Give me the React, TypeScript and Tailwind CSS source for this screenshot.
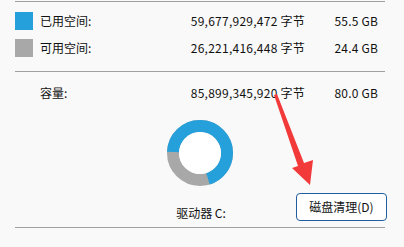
import React from "react";

const font = { fontFamily: '"Noto Sans CJK SC", "Noto Sans", sans-serif' };

function Row({ color, label, bytes, gb }: { color?: string; label: string; bytes: string; gb: string }) {
  return (
    <div className="flex items-center h-[18px]">
      <div className="w-[18px] h-[18px] shrink-0" style={color ? { backgroundColor: color } : undefined} />
      <div className="ml-[7px] w-[146px] text-[12px] leading-none text-[#111111]">{label}</div>
      <div className="w-[119px] text-right text-[12px] tracking-[0.25px] leading-none text-[#111111] whitespace-nowrap">{bytes}</div>
      <div className="w-[73px] text-right text-[12px] tracking-[0.2px] leading-none text-[#111111] whitespace-nowrap">{gb}</div>
    </div>
  );
}

export default function App() {
  const r = 27;
  const c = 2 * Math.PI * r;
  const used = 55.5 / 80;
  return (
    <div className="relative w-[404px] h-[247px] bg-[#f9f9f9] overflow-hidden" style={font}>
      <div className="ml-[15px] w-[370px] pt-[1px]">
        <div className="h-px bg-[#a0a0a0]" />
        <div className="pt-[10px] flex flex-col gap-[9px]">
          <Row color="#26a0da" label="已用空间:" bytes="59,677,929,472 字节" gb="55.5 GB" />
          <Row color="#a8a8a8" label="可用空间:" bytes="26,221,416,448 字节" gb="24.4 GB" />
        </div>
        <div className="mt-[14px] h-px bg-[#a0a0a0]" />
        <div className="mt-[12px]">
          <Row label="容量:" bytes="85,899,345,920 字节" gb="80.0 GB" />
        </div>
      </div>
      <div className="ml-[167px] mt-[18px] w-[66px] h-[66px]">
        <svg width="66" height="66" viewBox="0 0 66 66">
          <circle cx="33" cy="33" r={r} fill="none" stroke="#a8a8a8" strokeWidth="12" />
          <circle
            cx="33"
            cy="33"
            r={r}
            fill="none"
            stroke="#26a0da"
            strokeWidth="12"
            strokeDasharray={`${c * used} ${c}`}
            transform="rotate(182 33 33)"
          />
          <circle cx="33" cy="33" r="21" fill="#ffffff" />
        </svg>
      </div>
      <div className="flex items-start h-[28px] mt-[7px]">
        <div className="ml-[151px] mt-[14px] w-[100px] text-center text-[12px] leading-none text-[#111111]">驱动器 C:</div>
        <button className="ml-[45px] w-[91px] h-[28px] rounded-[4px] border border-[#1f5f9f] bg-white text-[12px] leading-none text-[#111111]">
          磁盘清理(D)
        </button>
      </div>
      <div className="ml-[15px] mt-[6px] w-[370px] h-px bg-[#a0a0a0]" />
      <svg className="absolute left-0 top-0 pointer-events-none" width="404" height="247" viewBox="0 0 404 247">
        <polygon
          points="274,95 277,94 304,163 313,160 310,185 292,168 298,166"
          fill="#f23a3a"
        />
      </svg>
    </div>
  );
}
